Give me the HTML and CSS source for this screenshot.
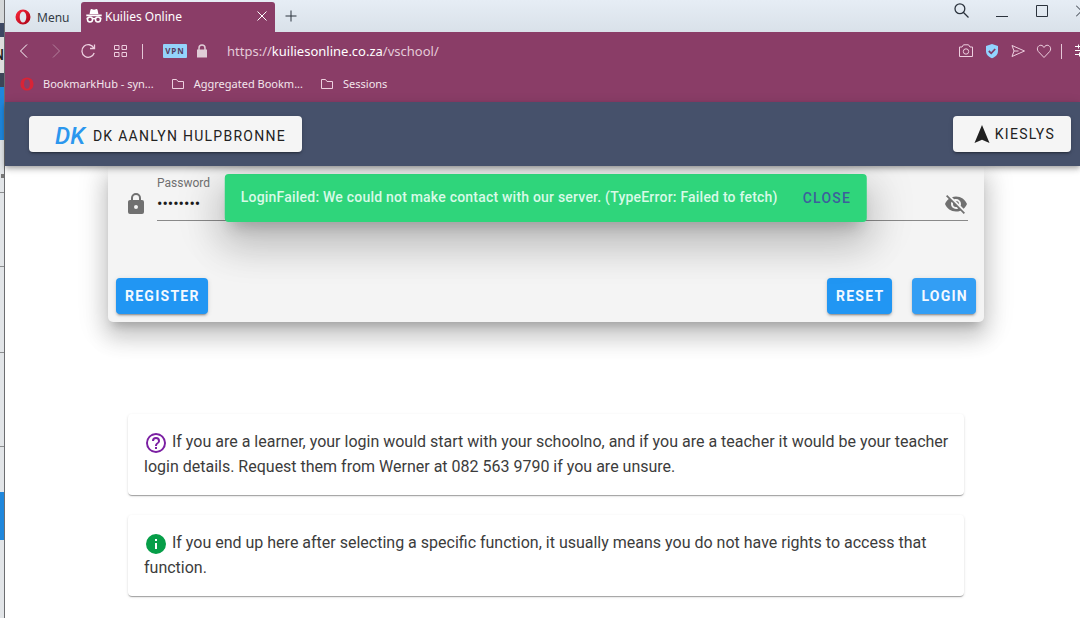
FILE: index.html
```html
<!DOCTYPE html>
<html lang="en">
<head>
<meta charset="utf-8">
<meta name="viewport" content="width=device-width, initial-scale=1">
<title>Kuilies Online</title>
<link rel="stylesheet" href="styles.css">
</head>
<body>
<div class="backdrop" aria-hidden="true">
  <div class="sliver sliver-tab"></div>
  <div class="sliver sliver-navy"></div>
  <div class="sliver sliver-button"><span class="sliver-letter">N</span></div>
  <div class="sliver sliver-shade"></div>
  <div class="sliver sliver-blue"></div>
  <div class="sliver sliver-mark"></div>
  <div class="sliver sliver-row"></div>
  <div class="sliver sliver-row sliver-row-tall"></div>
  <div class="sliver sliver-row sliver-row-taller"></div>
  <div class="sliver sliver-gap"></div>
  <div class="sliver sliver-blue sliver-blue-low"></div>
</div>
<div class="window">
  <header class="titlebar">
    <button class="menu-button" type="button">
      <svg class="opera" viewBox="0 0 16 16" width="16" height="16"><defs><linearGradient id="op" x1="0" y1="0" x2="1" y2="1"><stop offset="0" stop-color="#ff2a3c"/><stop offset="1" stop-color="#a70014"/></linearGradient></defs><path fill="url(#op)" fill-rule="evenodd" d="M8 .5a7.5 7.5 0 1 0 0 15a7.5 7.5 0 1 0 0-15zM8 2.500a3.300 5.500 0 1 0 0 11a3.300 5.500 0 1 0 0-11z"/></svg>
      <span>Menu</span>
    </button>
    <div class="tab">
      <svg viewBox="0 0 16 16" width="16" height="16"><path fill="#fff" d="M3.600 6L4.400 2C4.600 1 5.400.9 6.200 1.300C7.200 1.800 8.800 1.800 9.800 1.300C10.600.9 11.400 1 11.600 2L12.400 6zM.3 6.600H15.700V8.200H.3z"/><g fill="none" stroke="#fff" stroke-width="1.500"><circle cx="4" cy="11.600" r="2.500"/><circle cx="12" cy="11.600" r="2.500"/><path d="M6.500 11q1.500-1.200 3 0M.5 10.500H2M14 10.500h1.500"/></g></svg>
      <span class="tab-title">Kuilies Online</span>
      <button class="icon-button" type="button" aria-label="Close tab"><svg viewBox="0 0 12 12" width="12" height="12"><path class="line-white" d="M1.500 1.500l9 9M10.500 1.500l-9 9"/></svg></button>
    </div>
    <button class="icon-button new-tab" type="button" aria-label="New tab"><svg viewBox="0 0 12 12" width="12" height="12"><path class="line-dark" d="M6 .5v11M.5 6h11"/></svg></button>
    <div class="window-controls">
      <button class="icon-button" type="button" aria-label="Search"><svg viewBox="0 0 16 16" width="16" height="16"><path class="line-dark" stroke-width="1.300" d="M9.500 9.500l5 5M1 5.800a4.900 4.900 0 1 0 9.800 0a4.900 4.900 0 1 0-9.800 0"/></svg></button>
      <button class="icon-button control-minimise" type="button" aria-label="Minimise"><svg viewBox="0 0 12 12" width="12" height="12"><path class="line-dark" d="M0 11.500h12"/></svg></button>
      <button class="icon-button control-maximise" type="button" aria-label="Maximise"><svg viewBox="0 0 12 12" width="12" height="12"><path class="line-dark" d="M.5.5h11v11H.5z"/></svg></button>
      <button class="icon-button" type="button" aria-label="Close window"><svg viewBox="0 0 4 12" width="4" height="12"><path class="line-dark" d="M0 .5L5.500 6L0 11.500"/></svg></button>
    </div>
  </header>
  <div class="toolbar">
    <div class="nav-icons">
      <button class="icon-button" type="button" aria-label="Back"><svg viewBox="0 0 16 16" width="16" height="16"><path class="line-white" d="M11 1.500L4.500 8l6.500 6.500"/></svg></button>
      <button class="icon-button dim" type="button" aria-label="Forward"><svg viewBox="0 0 16 16" width="16" height="16"><path class="line-white" d="M5 1.500l6.500 6.500L5 14.500"/></svg></button>
      <button class="icon-button" type="button" aria-label="Reload"><svg viewBox="0 0 16 16" width="16" height="16"><path class="line-pale" stroke-width="1.300" d="M14.200 10A6.300 6.300 0 1 1 13.800 5M14.500 1.500V5.500H10"/></svg></button>
      <button class="icon-button" type="button" aria-label="Speed dial"><svg viewBox="0 0 16 16" width="16" height="16"><path class="line-pale" d="M2.500 2.500h4.500v4H2.500zM10 2.500h4.500v4H10zM2.500 9.500h4.500v4H2.500zM10 9.500h4.500v4H10z"/></svg></button>
    </div>
    <span class="divider"></span>
    <button class="vpn" type="button">VPN</button>
    <svg class="padlock" viewBox="0 0 10 14" width="10" height="14"><path fill="#e0cdd7" d="M0 5.500h10v8H0z"/><path fill="none" stroke="#e0cdd7" stroke-width="1.500" d="M2 6V4a3 3 0 0 1 6 0v2"/></svg>
    <a class="address" href="#">https://<b>kuiliesonline.co.za</b>/vschool/</a>
    <div class="page-actions">
      <button class="icon-button" type="button" aria-label="Snapshot"><svg viewBox="0 0 16 16" width="16" height="16"><path class="line-pale" d="M1.500 4H4l1.500-2.200h5L12 4h2.500v9.500h-13z"/><circle class="line-pale" cx="8" cy="8.500" r="2.700"/></svg></button>
      <button class="icon-button" type="button" aria-label="Ad blocker"><svg viewBox="0 0 16 16" width="16" height="16"><path fill="#92d4ff" d="M8 1l6 2v5c0 3.500-2.500 5.800-6 7.200C4.500 13.800 2 11.500 2 8V3z"/><path fill="none" stroke="#813b66" stroke-width="1.800" d="M4.800 8l2.400 2.300l4-4.300"/></svg></button>
      <button class="icon-button" type="button" aria-label="Send"><svg viewBox="0 0 16 16" width="16" height="16"><path class="line-pale" d="M2 2.500L14.500 8L2 13.500L4 8zM4 8h4.500"/></svg></button>
      <button class="icon-button" type="button" aria-label="Bookmark"><svg viewBox="0 0 16 16" width="16" height="16"><path class="line-pale" d="M8 14.500L2.300 8.500C-.3 5 3 1.200 6 2.500Q7.400 3.200 8 4.500Q8.600 3.200 10 2.500C13 1.200 16.300 5 13.700 8.500z"/></svg></button>
      <span class="divider"></span>
      <button class="icon-button" type="button" aria-label="Easy setup"><svg class="setup" viewBox="0 0 5 14" width="5" height="14"><path class="line-white" d="M0 2.500h5M0 6.500h5M0 10.500h5M3.500 .5v4M4.500 8.500v4"/></svg></button>
    </div>
  </div>
  <nav class="bookmarks">
    <a class="bookmark" href="#"><svg viewBox="0 0 16 16" width="14" height="14"><path fill="#d82436" fill-rule="evenodd" d="M8 .5a7.500 7.500 0 1 0 0 15a7.500 7.500 0 1 0 0-15zM8 2.500a3.300 5.500 0 1 0 0 11a3.300 5.500 0 1 0 0-11z"/></svg><span>BookmarkHub - syn...</span></a>
    <a class="bookmark" href="#"><svg viewBox="0 0 14 14" width="14" height="14"><path class="line-pale" d="M1.500 2.500h4l1.500 2h5.500v7h-11z"/></svg><span>Aggregated Bookm...</span></a>
    <a class="bookmark" href="#"><svg viewBox="0 0 14 14" width="14" height="14"><path class="line-pale" d="M1.500 2.500h4l1.500 2h5.500v7h-11z"/></svg><span>Sessions</span></a>
  </nav>
  <div class="appbar">
    <button class="app-button brand" type="button"><span class="brand-mark">DK</span><span>DK Aanlyn Hulpbronne</span></button>
    <button class="app-button choose" type="button"><svg viewBox="0 0 16 20" width="16" height="20"><path fill="#202020" d="M8 1L15.500 19L8 15.800L.5 19z"/></svg><span>Kieslys</span></button>
  </div>
  <main class="page">
    <form class="login-card">
      <div class="field-row">
        <svg class="field-icon" viewBox="0 0 24 24" width="24" height="24"><path fill="#707070" d="M12,17A2,2 0 0,0 14,15C14,13.890 13.100,13 12,13A2,2 0 0,0 10,15A2,2 0 0,0 12,17M18,8A2,2 0 0,1 20,10V20A2,2 0 0,1 18,22H6A2,2 0 0,1 4,20V10C4,8.890 4.900,8 6,8H7V6A5,5 0 0,1 12,1A5,5 0 0,1 17,6V8H18M12,3A3,3 0 0,0 9,6V8H15V6A3,3 0 0,0 12,3Z"/></svg>
        <div class="field">
          <div class="field-text">
            <label for="password">Password</label>
            <input id="password" type="password" value="12345678">
          </div>
          <button class="icon-button reveal" type="button" aria-label="Show password"><svg viewBox="0 0 24 24" width="24" height="24"><path fill="#707070" d="M11.830,9L15,12.160C15,12.110 15,12.050 15,12A3,3 0 0,0 12,9C11.940,9 11.890,9 11.830,9M7.530,9.800L9.080,11.350C9.030,11.560 9,11.770 9,12A3,3 0 0,0 12,15C12.220,15 12.440,14.970 12.650,14.920L14.200,16.450C13.530,16.780 12.790,17 12,17A5,5 0 0,1 7,12C7,11.210 7.200,10.470 7.530,9.800M2,4.270L4.280,6.550L4.730,7C3.080,8.300 1.780,10 1,12C2.730,16.390 7,19.500 12,19.500C13.550,19.500 15.030,19.200 16.380,18.660L16.810,19.080L19.730,22L21,20.730L3.270,3M12,7A5,5 0 0,1 17,12C17,12.640 16.870,13.260 16.640,13.820L19.570,16.750C21.070,15.500 22.270,13.860 23,12C21.270,7.610 17,4.500 12,4.500C10.600,4.500 9.260,4.750 8,5.200L10.170,7.350C10.740,7.130 11.350,7 12,7Z"/></svg></button>
        </div>
      </div>
      <div class="actions">
        <button class="action" type="button">Register</button>
        <span class="spacer"></span>
        <button class="action" type="reset">Reset</button>
        <button class="action action-hover" type="button">Login</button>
      </div>
      <div class="snackbar" role="alert">
        <span class="snackbar-text">LoginFailed: We could not make contact with our server. (TypeError: Failed to fetch)</span>
        <button class="snackbar-close" type="button">Close</button>
      </div>
    </form>
    <section class="notices">
      <p class="notice"><svg viewBox="0 0 24 24" width="24" height="24"><path fill="#7b1fa2" d="M11,18H13V16H11V18M12,2A10,10 0 0,0 2,12A10,10 0 0,0 12,22A10,10 0 0,0 22,12A10,10 0 0,0 12,2M12,20C7.590,20 4,16.410 4,12C4,7.590 7.590,4 12,4C16.410,4 20,7.590 20,12C20,16.410 16.410,20 12,20M12,6A4,4 0 0,0 8,10H10A2,2 0 0,1 12,8A2,2 0 0,1 14,10C14,12 11,11.750 11,15H13C13,12.750 16,12.500 16,10A4,4 0 0,0 12,6Z"/></svg> If you are a learner, your login would start with your schoolno, and if you are a teacher it would be your teacher login details. Request them from Werner at 082 563 9790 if you are unsure.</p>
      <p class="notice"><svg viewBox="0 0 24 24" width="24" height="24"><path fill="#069e48" d="M13,9H11V7H13M13,17H11V11H13M12,2A10,10 0 0,0 2,12A10,10 0 0,0 12,22A10,10 0 0,0 22,12A10,10 0 0,0 12,2Z"/></svg> If you end up here after selecting a specific function, it usually means you do not have rights to access that function.</p>
    </section>
  </main>
</div>
</body>
</html>
```
FILE: styles.css
```css
* { box-sizing: border-box; }
body {
  margin: 0;
  min-height: 100vh;
  display: flex;
  overflow: hidden;
  background: #fff;
  color: #3c3c3c;
  font-family: Roboto, sans-serif;
  font-size: 16px;
}
button {
  margin: 0;
  padding: 0;
  border: 0;
  background: none;
  color: inherit;
  font: inherit;
}
a { color: inherit; text-decoration: none; }
svg { flex: none; }
.line-white, .line-pale, .line-dark { fill: none; stroke: #fff; }
.line-pale { stroke: #edcfdf; }
.line-dark { stroke: #2b333d; }

/* Window behind, seen along the left edge */
.backdrop {
  flex: none;
  display: flex;
  flex-direction: column;
  width: 5px;
  border-right: 1px solid #6c6d70;
  background: #e2e5e8;
}
.sliver { flex: none; overflow: hidden; }
.sliver-tab { height: 23px; background: #d5d8da; }
.sliver-navy { height: 14px; background: #3d4863; }
.sliver-button {
  display: flex;
  align-items: center;
  justify-content: flex-end;
  height: 36px;
  background: #dedede;
}
.sliver-letter { color: #222; font-size: 14px; font-weight: 500; }
.sliver-shade { height: 14px; background: #3d4658; }
.sliver-blue { height: 53px; background: #1f87dc; }
.sliver-mark { height: 53px; border-bottom: 1px solid #8b8d8f; background: linear-gradient(#777, #777) 1px 34px / 3px 4px no-repeat; }
.sliver-row { height: 74px; border-bottom: 1px solid #8b8d8f; }
.sliver-row-tall { height: 86px; }
.sliver-row-taller { height: 94px; }
.sliver-gap { height: 45px; }
.sliver-blue-low { height: 48px; }

/* Browser chrome */
.window { flex: 1; min-width: 0; display: flex; flex-direction: column; }
.titlebar, .toolbar, .bookmarks, .tab { font-family: "Noto Sans", sans-serif; font-size: 12px; }
.titlebar {
  display: flex;
  height: 32px;
  background: linear-gradient(#e6edf5, #d9e1e9);
}
.icon-button { display: flex; align-items: center; justify-content: center; }
.menu-button {
  display: flex;
  align-items: center;
  gap: 6px;
  width: 76px;
  padding: 2px 0 0 10px;
  color: #333b45;
}
.tab {
  display: flex;
  align-items: center;
  gap: 3px;
  width: 194px;
  margin-top: 2px;
  padding: 0 7px 2px 5px;
  border-radius: 3px 3px 0 0;
  background: #8a3d67;
  color: #fff;
}
.tab-title { flex: 1; }
.new-tab { width: 31px; }
.window-controls {
  display: flex;
  align-items: center;
  gap: 28px;
  margin-left: auto;
  padding-bottom: 10px;
}
.window-controls .icon-button:first-child { margin-right: -2px; }
.toolbar {
  display: flex;
  align-items: center;
  height: 38px;
  padding-left: 11px;
  background: #8a3d67;
  color: #e4cbd8;
}
.nav-icons { display: flex; gap: 16px; }
.dim { opacity: .35; }
.divider { width: 1px; height: 15px; background: #e4c7d6; }
.nav-icons + .divider { margin-left: 14px; }
.vpn {
  width: 24px;
  height: 14px;
  margin: 0 10px 0 20px;
  border-radius: 1px;
  background: #94d3fb;
  color: #573c60;
  font-size: 8px;
  font-weight: 700;
  letter-spacing: 1px;
  line-height: 14px;
  text-align: center;
}
.padlock { margin-right: 20px; }
.address { font-size: 13px; }
.address b { color: #fff; font-weight: 400; }
.page-actions { display: flex; align-items: center; gap: 10px; margin-left: auto; }
.page-actions .divider { margin-left: -1px; }
.setup { margin-left: 3px; }
.bookmarks {
  display: flex;
  gap: 17px;
  height: 32px;
  padding: 0 15px 5px;
  background: #8a3d67;
  color: #f3e5ec;
  font-size: 11px;
}
.bookmark { display: flex; align-items: center; gap: 9px; }

/* Application header */
.appbar {
  z-index: 1;
  display: flex;
  align-items: center;
  justify-content: space-between;
  height: 64px;
  padding: 0 9px 0 24px;
  background: #46516b;
  box-shadow: 0 2px 4px -1px rgba(0, 0, 0, .2), 0 4px 5px rgba(0, 0, 0, .14), 0 1px 10px rgba(0, 0, 0, .12);
}
.app-button {
  display: flex;
  align-items: center;
  height: 36px;
  border-radius: 4px;
  background: #f5f5f5;
  box-shadow: 0 3px 1px -2px rgba(0, 0, 0, .2), 0 2px 2px rgba(0, 0, 0, .14), 0 1px 5px rgba(0, 0, 0, .12);
  color: #222;
  font-size: 14px;
  letter-spacing: .09em;
  text-transform: uppercase;
}
.brand { gap: 8px; padding: 3px 16px 0 26px; }
.brand-mark {
  color: #2b97ee;
  font-size: 24px;
  font-style: italic;
  font-weight: 500;
  letter-spacing: 0;
}
.choose { gap: 5px; padding: 0 16px 0 21px; }

/* Login page */
.page { padding: 0 96px 0 103px; }
.login-card {
  position: relative;
  padding: 10px 8px 8px;
  border-radius: 0 0 5px 5px;
  background: #f4f4f4;
  box-shadow: 0 8px 9px -5px rgba(0, 0, 0, .2), 0 15px 22px 2px rgba(0, 0, 0, .14), 0 6px 28px 5px rgba(0, 0, 0, .12);
}
.field-row { display: flex; gap: 9px; padding: 0 8px; }
.field-icon { margin-top: 16px; }
.field {
  flex: 1;
  display: flex;
  height: 45px;
  border-bottom: 1px solid #898989;
}
.field-text { flex: 1; display: flex; flex-direction: column; }
.field label { color: #707070; font-size: 12px; line-height: 14px; }
.field input {
  width: 100%;
  height: 26px;
  padding: 0;
  border: 0;
  outline: 0;
  background: transparent;
  color: #1c1c1c;
  font: 16px Roboto, sans-serif;
}
.reveal { height: 24px; margin-top: 16px; }
.actions { display: flex; gap: 20px; margin-top: 57px; }
.spacer { flex: 1; }
.action {
  height: 36px;
  padding: 0 8px 0 9px;
  border-radius: 4px;
  background: #2196f3;
  box-shadow: 0 3px 1px -2px rgba(0, 0, 0, .2), 0 2px 2px rgba(0, 0, 0, .14), 0 1px 5px rgba(0, 0, 0, .12);
  color: #f3f9ff;
  font-size: 14px;
  font-weight: 700;
  letter-spacing: .09em;
  text-transform: uppercase;
}
.action-hover { background: #339ef4; }
.snackbar {
  position: absolute;
  top: 8px;
  left: 50%;
  transform: translateX(-50%);
  display: flex;
  align-items: center;
  gap: 25px;
  height: 48px;
  padding: 0 16px;
  border-radius: 4px;
  background: #2fd57b;
  box-shadow: 0 11px 15px -7px rgba(0, 0, 0, .2), 0 24px 38px 3px rgba(0, 0, 0, .14), 0 9px 46px 8px rgba(0, 0, 0, .12);
  color: #d8fae7;
  font-size: 14px;
  font-weight: 500;
  white-space: nowrap;
}
.snackbar-text { padding-bottom: 2px; letter-spacing: .015em; }
.snackbar-close { color: #3c5f9c; letter-spacing: .09em; text-transform: uppercase; }
.notices {
  display: flex;
  flex-direction: column;
  gap: 20px;
  margin-top: 92px;
  padding: 0 20px;
}
.notice {
  margin: 0;
  padding: 15px 14px 16px 16px;
  border-radius: 4px;
  box-shadow: 0 2px 1px -1px rgba(0, 0, 0, .2), 0 1px 1px rgba(0, 0, 0, .14), 0 1px 3px rgba(0, 0, 0, .12);
  line-height: 25px;
}
.notice svg { height: 24px; margin-bottom: -2px; vertical-align: -6px; }
```
